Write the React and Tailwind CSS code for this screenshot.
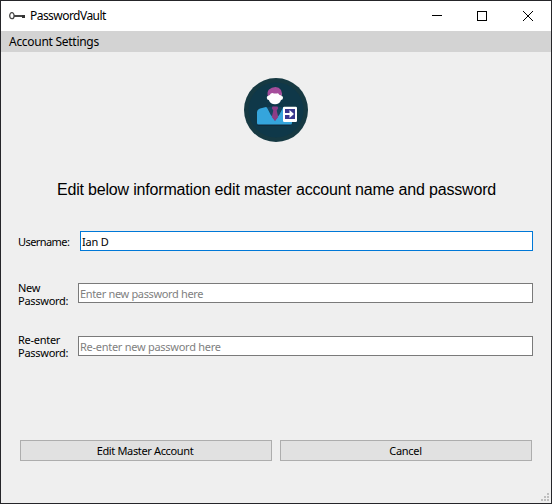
import React from 'react';

function KeyIcon() {
  return (
    <svg width="16" height="8" viewBox="0 0 16 8" className="block" fill="none">
      <ellipse cx="2.900" cy="3.700" rx="2.200" ry="3" stroke="#444" strokeWidth="1.300" />
      <path d="M5 3h11v2H5z" fill="#444" />
      <path d="M13 3h3v3h-3z" fill="#333" />
    </svg>
  );
}

function Avatar() {
  return (
    <svg width="64" height="64" viewBox="0 0 64 64" className="block">
      <circle cx="32" cy="32" r="32" fill="#163942" />
      <circle cx="32" cy="32" r="27.5" fill="#0f3849" />
      <path d="M13.500 46h33v2h-33z" fill="#102b3c" />
      <path d="M13 45V34.500q0-3 3-4l6-1.500 1.500 1 7.500 12.500L38.500 30l1.500-1 8 3v13q0 1.500-1.500 1.500H14.500Q13 46.500 13 45z" fill="#35a5dc" />
      <path d="M23 29.500l5-1h6l5 1-3.500 7-4.500 6-4.500-6z" fill="#154560" />
      <path d="M28.500 28.500h5l.7 1.800-1.500 2.200 1.500 6.500-3.200 4-3.200-4 1.500-6.500-1.500-2.200z" fill="#8c3d86" />
      <path d="M24 15h13.500v3q1.800 0 1.500 2-.3 1.800-2 2Q35.500 26.300 31 26.300T24.800 22q-1.800-.2-2-2-.2-2 1.200-2z" fill="#fff" />
      <path d="M23.800 18q-1-4.500 1.200-6.500Q27.500 9 31.500 9q3.500.2 5.500 3 1.300 2.500.6 5.500l-2-.5-1.600-1.700q-3.500.6-5.500-.4-2 0-2.700 2.100z" fill="#a54d9b" />
      <rect x="39" y="28.700" width="14" height="15.300" rx="1.200" fill="#fff" />
      <path d="M41 31h10v10H41z" fill="#39378f" />
      <path d="M40.500 35h5v-3l4.500 4-4.500 4v-3h-5z" fill="#fff" />
    </svg>
  );
}

function SizeGrip() {
  return (
    <svg width="8" height="8" viewBox="0 0 8 8" className="block" fill="#bfbfbf" shapeRendering="crispEdges">
      <path d="M6 0h2v2H6zM3 3h2v2H3zM6 3h2v2H6zM0 6h2v2H0zM3 6h2v2H3zM6 6h2v2H6z" />
    </svg>
  );
}

export default function App() {
  return (
    <div className="flex h-[504px] w-[552px] flex-col overflow-hidden border border-[#252529] bg-[#efefef] font-['Noto_Sans',sans-serif] text-[11px] leading-[13px] text-black">
      <header className="flex h-[30px] shrink-0 items-center bg-white pl-2">
        <KeyIcon />
        <h1 className="ml-[5px] text-[12px] leading-4 tracking-[-0.54px] whitespace-nowrap">PasswordVault</h1>
        <svg width="102" height="12" viewBox="0 0 102 12" className="mr-[17px] ml-auto block" fill="none" stroke="#000">
          <path d="M0 5.500h10M45.500 1.500h9v9h-9z" shapeRendering="crispEdges" />
          <path d="M91 1l10 10M101 1L91 11" />
        </svg>
      </header>
      <nav className="flex h-[21px] shrink-0 items-center bg-[#d3d3d3] pl-2 text-[12px] leading-4">
        <span className="tracking-[-0.28px] whitespace-nowrap">Account Settings</span>
      </nav>
      <main className="flex grow flex-col">
        <div className="mt-[26px] ml-[243px]"><Avatar /></div>
        <h2 className="mt-[38px] pl-px text-center font-['Liberation_Sans',sans-serif] text-[16px] leading-5 tracking-[-0.183px] whitespace-nowrap">
          Edit below information edit master account name and password
        </h2>
        <div className="mt-[31px] flex h-5 pr-[18px] pl-[17px]">
          <label htmlFor="user" className="w-[62px] shrink-0 pt-1 tracking-[-0.57px] whitespace-nowrap">Username:</label>
          <input id="user" defaultValue="Ian D" className="h-5 min-w-0 grow border border-[#0078d7] bg-white pt-px pl-px tracking-[-0.2px] outline-none" />
        </div>
        <div className="mt-8 flex h-[26px] pr-[18px] pl-[17px]">
          <label htmlFor="new" className="-mt-0.5 w-[60px] shrink-0 tracking-[-0.27px]">New<br />Password:</label>
          <input id="new" placeholder="Enter new password here" className="h-5 min-w-0 grow border border-[#7a7a7a] bg-white pt-px pl-px tracking-[-0.34px] outline-none placeholder:text-[#7f7f7f]" />
        </div>
        <div className="mt-[27px] flex h-[26px] pr-[18px] pl-[17px]">
          <label htmlFor="again" className="-mt-[3px] w-[60px] shrink-0 tracking-[-0.27px]">Re-enter<br />Password:</label>
          <input id="again" placeholder="Re-enter new password here" className="h-5 min-w-0 grow border border-[#7a7a7a] bg-white pt-px pl-px tracking-[-0.27px] outline-none placeholder:text-[#7f7f7f]" />
        </div>
        <div className="mt-[78px] ml-[19px] flex gap-2">
          <button className="h-[21px] w-[252px] border border-[#adadad] bg-[#e1e1e1] pr-0.5 tracking-[-0.35px]">Edit Master Account</button>
          <button className="h-[21px] w-[252px] border border-[#adadad] bg-[#e1e1e1] pr-px tracking-[-0.3px]">Cancel</button>
        </div>
        <div className="mt-auto mr-[2px] mb-[2px] ml-auto"><SizeGrip /></div>
      </main>
    </div>
  );
}
